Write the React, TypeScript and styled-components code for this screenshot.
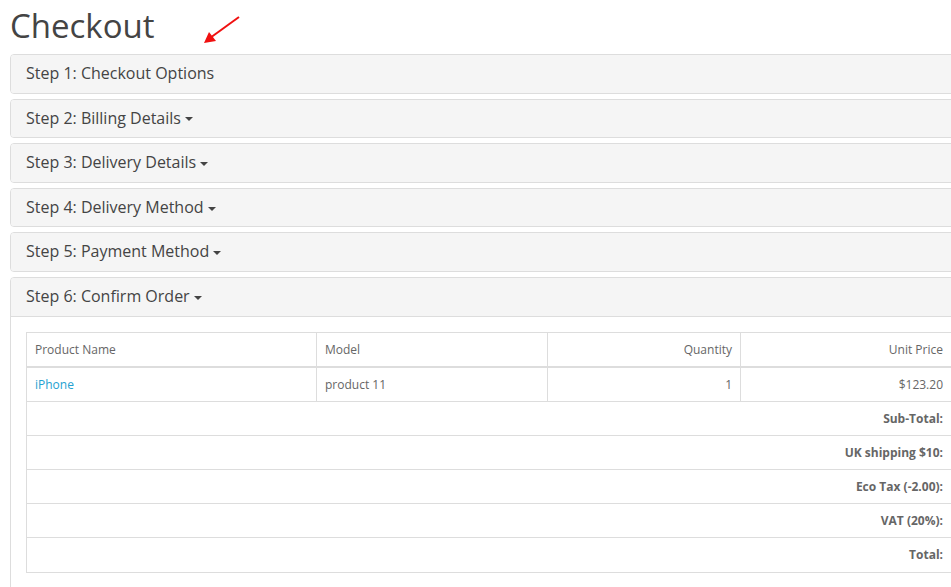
import React from "react";
import styled, { createGlobalStyle } from "styled-components";

const Global = createGlobalStyle`
  html, body { margin: 0; padding: 0; background: #fff; overflow: hidden; }
  body { font-family: "Open Sans", "Liberation Sans", sans-serif; color: #666; font-size: 12px; }
`;

const Page = styled.div`
  position: relative;
  width: 1200px;
  padding: 0 10px;
`;

const Title = styled.h1`
  margin: 0;
  padding-top: 6px;
  font-size: 33px;
  line-height: 40px;
  font-weight: 400;
  color: #444;
  margin-bottom: 8px;
`;

const Arrow = styled.svg`
  position: absolute;
  left: 200px;
  top: 14px;
`;

const Group = styled.div`
  display: flex;
  flex-direction: column;
  gap: 5px;
`;

const Panel = styled.div`
  border: 1px solid #ddd;
  border-radius: 4px;
  background: #fff;
  overflow: hidden;
`;

const Heading = styled.div`
  background: #f5f5f5;
  padding: 10px 15px;
  font-size: 16px;
  line-height: 17.6px;
  color: #444;
  display: flex;
  align-items: center;
`;

const Caret = styled.span`
  display: inline-block;
  width: 0;
  height: 0;
  margin-left: 4px;
  margin-top: 2px;
  border-top: 4px solid #444;
  border-left: 4px solid transparent;
  border-right: 4px solid transparent;
`;

const Body = styled.div`
  border-top: 1px solid #ddd;
  padding: 15px;
  padding-bottom: 20px;
`;

const Table = styled.table`
  border-collapse: collapse;
  table-layout: fixed;
  width: 1075px;
  font-size: 12px;
  color: #666;
`;

const Th = styled.td<{ $right?: boolean }>`
  border: 1px solid #ddd;
  border-bottom-width: 2px;
  padding: 8px;
  line-height: 1.42857;
  text-align: ${(p) => (p.$right ? "right" : "left")};
`;

const Td = styled.td<{ $right?: boolean; $bold?: boolean }>`
  border: 1px solid #ddd;
  padding: 8px;
  line-height: 1.42857;
  text-align: ${(p) => (p.$right ? "right" : "left")};
  font-weight: ${(p) => (p.$bold ? 700 : 400)};
`;

const Link = styled.a`
  color: #23a1d1;
  text-decoration: none;
`;

const steps = [
  { label: "Step 1: Checkout Options", caret: false },
  { label: "Step 2: Billing Details", caret: true },
  { label: "Step 3: Delivery Details", caret: true },
  { label: "Step 4: Delivery Method", caret: true },
  { label: "Step 5: Payment Method", caret: true },
];

const totals = ["Sub-Total:", "UK shipping $10:", "Eco Tax (-2.00):", "VAT (20%):", "Total:"];

export default function App() {
  return (
    <>
      <Global />
      <Page>
        <Title>Checkout</Title>
        <Arrow width="44" height="32" viewBox="0 0 44 32">
          <line x1="39" y1="3" x2="10" y2="24" stroke="#f01010" strokeWidth="2" />
          <polygon points="4,29 9,18 16,27" fill="#f01010" />
        </Arrow>
        <Group>
          {steps.map((s) => (
            <Panel key={s.label}>
              <Heading>
                {s.label}
                {s.caret && <Caret />}
              </Heading>
            </Panel>
          ))}
          <Panel>
            <Heading>
              Step 6: Confirm Order
              <Caret />
            </Heading>
            <Body>
              <Table>
                <colgroup>
                  <col style={{ width: 290 }} />
                  <col style={{ width: 231 }} />
                  <col style={{ width: 193 }} />
                  <col style={{ width: 211 }} />
                  <col style={{ width: 150 }} />
                </colgroup>
                <thead>
                  <tr>
                    <Th>Product Name</Th>
                    <Th>Model</Th>
                    <Th $right>Quantity</Th>
                    <Th $right>Unit Price</Th>
                    <Th $right></Th>
                  </tr>
                </thead>
                <tbody>
                  <tr>
                    <Td>
                      <Link href="#">iPhone</Link>
                    </Td>
                    <Td>product 11</Td>
                    <Td $right>1</Td>
                    <Td $right>$123.20</Td>
                    <Td $right></Td>
                  </tr>
                  {totals.map((t) => (
                    <tr key={t}>
                      <Td colSpan={4} $right $bold>
                        {t}
                      </Td>
                      <Td $right></Td>
                    </tr>
                  ))}
                </tbody>
              </Table>
            </Body>
          </Panel>
        </Group>
      </Page>
    </>
  );
}
